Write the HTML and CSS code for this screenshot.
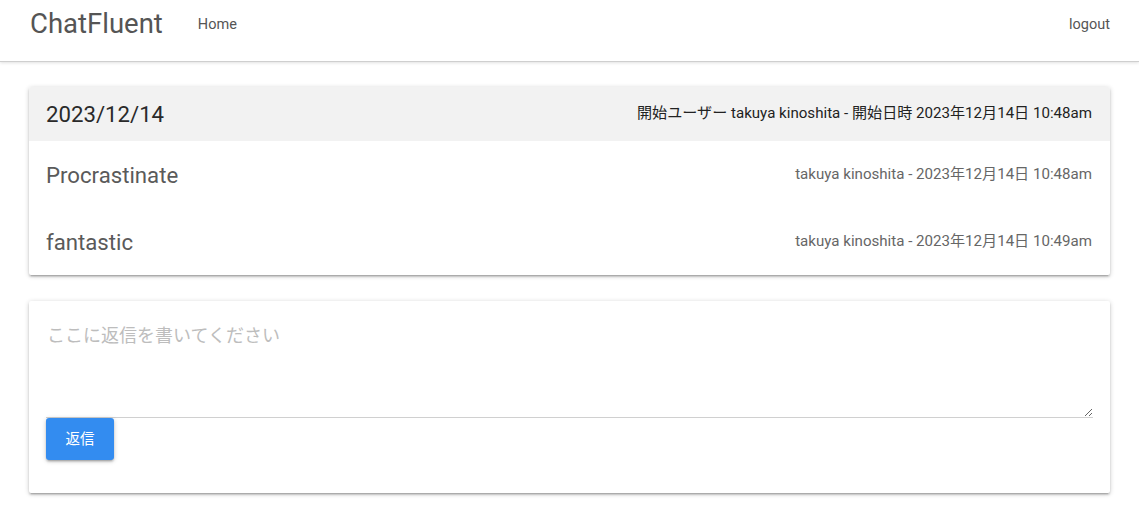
FILE: index.html
```html
<!DOCTYPE html>
<html lang="ja">
<head>
<meta charset="utf-8">
<title>ChatFluent</title>
<link rel="stylesheet" href="styles.css">
</head>
<body>
<nav class="nav">
  <a class="brand" href="#">ChatFluent</a>
  <a class="nav-link" href="#">Home</a>
  <span class="spacer"></span>
  <a class="nav-link" href="#">logout</a>
</nav>
<main class="main">
  <section class="card thread">
    <header class="thread-head">
      <h2 class="thread-date">2023/12/14</h2>
      <span class="thread-meta">開始ユーザー takuya kinoshita - 開始日時 2023年12月14日 10:48am</span>
    </header>
    <div class="msg">
      <span class="msg-text">Procrastinate</span>
      <span class="msg-meta">takuya kinoshita - 2023年12月14日 10:48am</span>
    </div>
    <div class="msg">
      <span class="msg-text">fantastic</span>
      <span class="msg-meta">takuya kinoshita - 2023年12月14日 10:49am</span>
    </div>
  </section>
  <section class="card reply">
    <textarea class="reply-input" placeholder="ここに返信を書いてください"></textarea>
    <button class="btn" type="button">返信</button>
  </section>
</main>
</body>
</html>
```
FILE: styles.css
```css
* { box-sizing: border-box; }
html, body { margin: 0; padding: 0; }
body {
  font-family: Roboto, "Noto Sans CJK JP", sans-serif;
  background: #fff;
  color: #333;
}
a { text-decoration: none; }

.nav {
  display: flex;
  align-items: center;
  height: 62px;
  padding: 0 29px 14px 30px;
  border-bottom: 1px solid #cfcfcf;
  box-shadow: 0 1px 3px rgba(0,0,0,0.12);
}
.brand {
  font-size: 27.5px;
  color: #555;
  font-weight: 400;
  margin-right: 35px;
}
.nav-link {
  font-size: 14.5px;
  color: #555;
  margin-top: 1px;
}
.spacer { flex: 1; }

.main {
  padding: 25px 29px;
  display: flex;
  flex-direction: column;
  gap: 26px;
}
.card {
  background: #fff;
  border-radius: 2px;
  box-shadow: 0 2px 2px 0 rgba(0,0,0,0.14), 0 3px 1px -2px rgba(0,0,0,0.12), 0 1px 5px 0 rgba(0,0,0,0.2);
}
.thread-head {
  display: flex;
  align-items: center;
  justify-content: space-between;
  height: 54px;
  padding: 0 18px 0 17px;
  background: #f2f2f2;
  border-radius: 2px 2px 0 0;
}
.thread-date {
  margin: 0;
  font-size: 22.2px;
  font-weight: 400;
  color: #2a2a2a;
}
.thread-meta {
  font-size: 15.1px;
  color: #222;
  margin-bottom: 6px;
}
.msg {
  display: flex;
  align-items: center;
  justify-content: space-between;
  height: 67px;
  padding: 0 18px 0 17px;
}
.msg-text {
  font-size: 22.2px;
  color: #5a5a5a;
  font-weight: 400;
}
.msg-meta {
  font-size: 15.1px;
  color: #666;
  margin-bottom: 6px;
}

.reply {
  display: flex;
  flex-direction: column;
  align-items: flex-start;
  padding: 17px 17px 33px 17px;
}
.reply-input {
  width: 100%;
  height: 100px;
  border: none;
  border-bottom: 1px solid #d0d0d0;
  outline: none;
  resize: vertical;
  padding: 6px 0 0 1px;
  font-family: Roboto, "Noto Sans CJK JP", sans-serif;
  font-size: 18px;
  line-height: 24px;
  color: #333;
}
.reply-input::placeholder { color: #bdbdbd; }
.btn {
  width: 68px;
  height: 42px;
  border: none;
  border-radius: 3px;
  background: #338cf0;
  color: #fff;
  font-family: Roboto, "Noto Sans CJK JP", sans-serif;
  font-size: 14.5px;
  padding: 0 0 3px;
  box-shadow: 0 2px 2px 0 rgba(0,0,0,0.14), 0 3px 1px -2px rgba(0,0,0,0.12), 0 1px 5px 0 rgba(0,0,0,0.2);
  cursor: pointer;
}
```
